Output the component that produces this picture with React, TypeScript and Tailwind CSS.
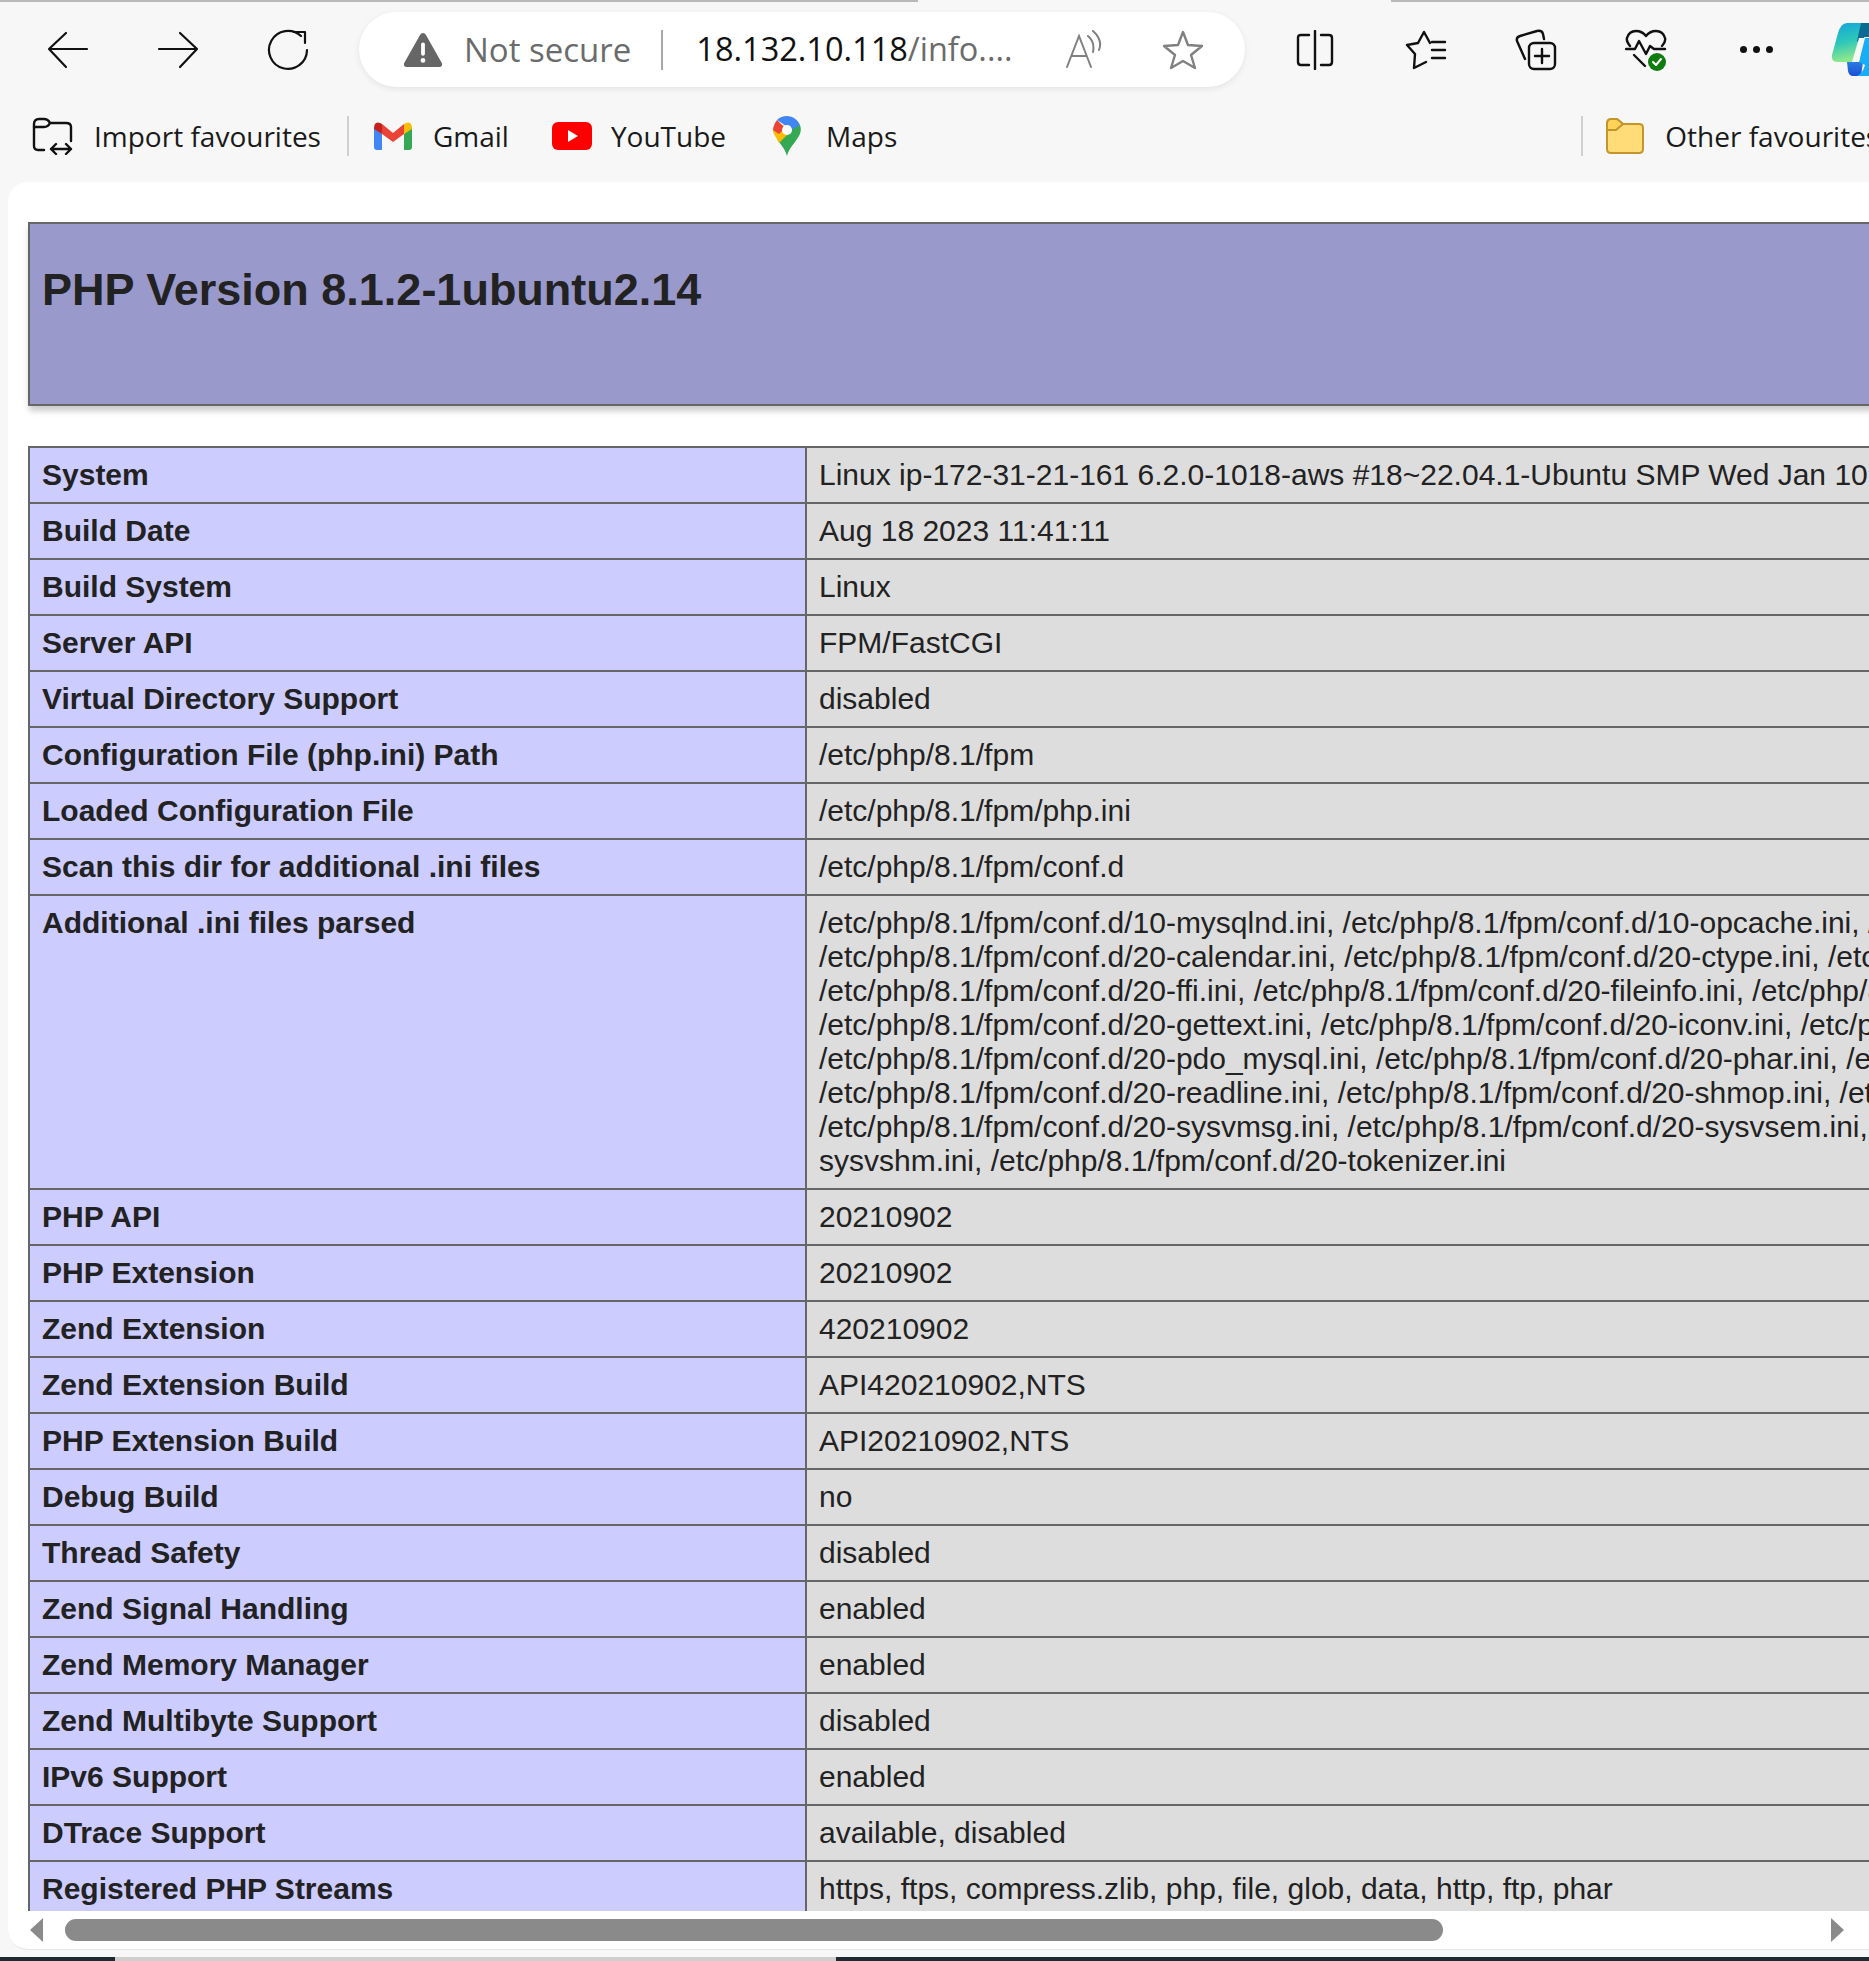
const rows: [string, string[]][] = [
  ['System', ['Linux ip-172-31-21-161 6.2.0-1018-aws #18~22.04.1-Ubuntu SMP Wed Jan 10 22:54:16 UTC 2024 x86_64']],
  ['Build Date', ['Aug 18 2023 11:41:11']],
  ['Build System', ['Linux']],
  ['Server API', ['FPM/FastCGI']],
  ['Virtual Directory Support', ['disabled']],
  ['Configuration File (php.ini) Path', ['/etc/php/8.1/fpm']],
  ['Loaded Configuration File', ['/etc/php/8.1/fpm/php.ini']],
  ['Scan this dir for additional .ini files', ['/etc/php/8.1/fpm/conf.d']],
  [
    'Additional .ini files parsed',
    [
      '/etc/php/8.1/fpm/conf.d/10-mysqlnd.ini, /etc/php/8.1/fpm/conf.d/10-opcache.ini, /etc/php/8.1/fpm/conf.d/10-pdo.ini,',
      '/etc/php/8.1/fpm/conf.d/20-calendar.ini, /etc/php/8.1/fpm/conf.d/20-ctype.ini, /etc/php/8.1/fpm/conf.d/20-exif.ini,',
      '/etc/php/8.1/fpm/conf.d/20-ffi.ini, /etc/php/8.1/fpm/conf.d/20-fileinfo.ini, /etc/php/8.1/fpm/conf.d/20-ftp.ini,',
      '/etc/php/8.1/fpm/conf.d/20-gettext.ini, /etc/php/8.1/fpm/conf.d/20-iconv.ini, /etc/php/8.1/fpm/conf.d/20-mysqli.ini,',
      '/etc/php/8.1/fpm/conf.d/20-pdo_mysql.ini, /etc/php/8.1/fpm/conf.d/20-phar.ini, /etc/php/8.1/fpm/conf.d/20-posix.ini,',
      '/etc/php/8.1/fpm/conf.d/20-readline.ini, /etc/php/8.1/fpm/conf.d/20-shmop.ini, /etc/php/8.1/fpm/conf.d/20-sockets.ini,',
      '/etc/php/8.1/fpm/conf.d/20-sysvmsg.ini, /etc/php/8.1/fpm/conf.d/20-sysvsem.ini, /etc/php/8.1/fpm/conf.d/20-',
      'sysvshm.ini, /etc/php/8.1/fpm/conf.d/20-tokenizer.ini',
    ],
  ],
  ['PHP API', ['20210902']],
  ['PHP Extension', ['20210902']],
  ['Zend Extension', ['420210902']],
  ['Zend Extension Build', ['API420210902,NTS']],
  ['PHP Extension Build', ['API20210902,NTS']],
  ['Debug Build', ['no']],
  ['Thread Safety', ['disabled']],
  ['Zend Signal Handling', ['enabled']],
  ['Zend Memory Manager', ['enabled']],
  ['Zend Multibyte Support', ['disabled']],
  ['IPv6 Support', ['enabled']],
  ['DTrace Support', ['available, disabled']],
  ['Registered PHP Streams', ['https, ftps, compress.zlib, php, file, glob, data, http, ftp, phar']],
];

const Back = () => (
  <svg width="42" height="38" viewBox="0 0 42 38" fill="none" stroke="#111" strokeWidth="2.2" strokeLinecap="round" strokeLinejoin="round">
    <path d="M40 18 H2 M19 2 L2 18 L19 36" />
  </svg>
);

const Forward = () => (
  <svg width="42" height="38" viewBox="0 0 42 38" fill="none" stroke="#111" strokeWidth="2.2" strokeLinecap="round" strokeLinejoin="round">
    <path d="M2 18 H40 M23 2 L40 18 L23 36" />
  </svg>
);

const Refresh = () => (
  <svg width="42" height="42" viewBox="0 0 42 42" fill="none" stroke="#111" strokeWidth="2.2" strokeLinecap="round" strokeLinejoin="round">
    <path d="M27 3 H38 V14" />
    <path d="M34 7 A19 19 0 1 0 40 21" />
  </svg>
);

const Gmail = () => (
  <svg width="38" height="28" viewBox="0 0 38 28">
    <path d="M0 5 V25 Q0 28 3 28 H8 V12 Z" fill="#4285f4" />
    <path d="M30 12 V28 H35 Q38 28 38 25 V5 Z" fill="#34a853" />
    <path d="M8 12 L19 20 L30 12 V2 L19 11 L8 2 Z" fill="#ea4335" />
    <path d="M0 7 L8 12 V2 L6 1 Q0 -1 0 7 Z" fill="#c5221f" />
    <path d="M30 12 L38 7 Q38 -1 32 1 L30 2 Z" fill="#fbbc04" />
  </svg>
);

const Youtube = () => (
  <svg width="40" height="28" viewBox="0 0 40 28">
    <rect x="0" y="0" width="40" height="28" rx="6" fill="#f00" />
    <path d="M16 8 L26 14 L16 20 Z" fill="#fff" />
  </svg>
);

const Maps = () => (
  <svg width="28" height="40" viewBox="0 0 28 40">
    <path d="M14 40 C12 32 7 28 4 23 L24 23 C21 28 16 32 14 40 Z" fill="#34a853" />
    <path d="M24 23 L9 23 L19 10 L27 9 C29 15 27 19 24 23 Z" fill="#34a853" />
    <path d="M4 23 C2 20 0 17 0 14 L10 9 L17 16 L6 27 Z" fill="#fbbc04" />
    <path d="M0 14 C0 10 2 7 4 4 L12 12 L6 18 Z" fill="#ea4335" />
    <path d="M4 4 C7 1 10 0 14 0 C20 0 25 4 27 9 L18 14 L10 8 Z" fill="#4285f4" />
    <circle cx="14" cy="14" r="5" fill="#fff" />
  </svg>
);

const ImportIcon = () => (
  <svg width="42" height="38" viewBox="0 0 42 38" fill="none" stroke="#111" strokeWidth="2.4" strokeLinejoin="round" strokeLinecap="round">
    <path d="M12 33 H6 Q2 33 2 29 V7 Q2 2 7 2 H12 Q16 2 18 6 H34 Q39 6 39 10 V24" />
    <path d="M2 10 H12 Q16 10 18 6" />
    <path d="M19 32 H39 M24 27 L19 32 L24 37 M34 27 L39 32 L34 37" />
  </svg>
);

const FolderIcon = () => (
  <svg width="40" height="38" viewBox="0 0 40 38">
    <path d="M2 8 Q2 2 6 2 H12 L18 7 H34 Q38 7 38 11 V32 Q38 36 34 36 H6 Q2 36 2 32 Z" fill="#ffdc78" stroke="#c4952a" strokeWidth="2" />
    <path d="M2 13 H11 L18 7 L12 2 H6 Q2 2 2 7 Z" fill="#ffd35a" stroke="#c4952a" strokeWidth="2" strokeLinejoin="round" />
  </svg>
);

const ReadAloud = () => (
  <svg width="40" height="40" viewBox="0 0 40 40" fill="none" stroke="#808080" strokeWidth="2" strokeLinecap="round">
    <path d="M2 37 L14 6 L26 37 M7 26 H21" />
    <path d="M23 6 Q30 12 28 22 M28 1 Q38 10 34 20" />
  </svg>
);

const FavStar = () => (
  <svg width="42" height="40" viewBox="0 0 42 40" fill="none" stroke="#808080" strokeWidth="2.4" strokeLinejoin="round">
    <path d="M21 2 L26 15 L40 16 L29 25 L33 38 L21 31 L9 38 L13 25 L2 16 L16 15 Z" />
  </svg>
);

const SplitScreen = () => (
  <svg width="38" height="40" viewBox="0 0 38 40" fill="none" stroke="#111" strokeWidth="2.4" strokeLinecap="round" strokeLinejoin="round">
    <path d="M13 5 H5 Q2 5 2 8 V32 Q2 35 5 35 H13" />
    <path d="M19 1 V39" />
    <path d="M25 5 H33 Q36 5 36 8 V32 Q36 35 33 35 H25" />
  </svg>
);

const FavList = () => (
  <svg width="42" height="40" viewBox="0 0 42 40" fill="none" stroke="#111" strokeWidth="2.4" strokeLinecap="round" strokeLinejoin="round">
    <path d="M25 13 L19 2 L13 13 L2 15 L10 24 L9 38 L21 32" />
    <path d="M27 12 H40 M27 20 H40 M27 28 H40" />
  </svg>
);

const Collections = () => (
  <svg width="42" height="42" viewBox="0 0 42 42" fill="none" stroke="#111" strokeWidth="2.4" strokeLinejoin="round" strokeLinecap="round">
    <rect x="14" y="14" width="26" height="26" rx="5" />
    <path d="M20 27 H34 M27 20 V34" />
    <path d="M10 30 L2 12 Q1 8 5 7 L22 2 Q27 1 28 5 L29 10" />
  </svg>
);

const Health = () => (
  <svg width="42" height="42" viewBox="0 0 42 42" fill="none" stroke="#111" strokeWidth="2.4" strokeLinejoin="round" strokeLinecap="round">
    <path d="M5 17 Q1 12 2 9 Q4 2 11 2 Q17 2 21 7 Q25 2 31 2 Q38 2 40 9 Q41 13 37 17" />
    <path d="M1 20 H10 L14 12 L21 25 L25 17 L29 20 H40" />
    <path d="M9 26 L20 37" />
    <circle cx="32" cy="33" r="9" fill="#107c10" stroke="none" />
    <path d="M28 33 L31 36 L36 30" stroke="#fff" strokeWidth="2" />
  </svg>
);

const Copilot = () => (
  <svg width="64" height="54" viewBox="0 0 64 54">
    <defs>
      <linearGradient id="cop-a" x1="0" y1="0" x2="0.2" y2="1">
        <stop offset="0" stopColor="#10a5dc" />
        <stop offset="0.55" stopColor="#30c8b8" />
        <stop offset="1" stopColor="#8ee88c" />
      </linearGradient>
      <linearGradient id="cop-b" x1="0" y1="0" x2="0" y2="1">
        <stop offset="0" stopColor="#2b7de0" />
        <stop offset="1" stopColor="#1d4fd8" />
      </linearGradient>
    </defs>
    <path d="M16 0 H34 L24 39 H6 Q0 39 1 32 L7 10 Q10 0 16 0 Z" fill="url(#cop-a)" />
    <path d="M16 39 H32 L30 53 H22 Q18 53 17 48 Z" fill="url(#cop-b)" />
    <path d="M30 0 H64 V14 H34 Q32 14 30 22 L26 18 Z" fill="#0a6a92" />
    <path d="M32 15 H64 V53 H26 Q32 50 34 42 L28 39 Z" fill="#18aef5" />
    <path d="M28 15 H34 L28 39 H21 Z" fill="#f7f7f7" />
  </svg>
);

export default function App() {
  return (
    <div className="flex h-[1961px] w-[1869px] flex-col overflow-hidden bg-[#f7f7f7] font-['Open_Sans',sans-serif]">
      {/* 顶部标签残边 */}
      <div className="flex h-[2px] shrink-0">
        <div className="h-full w-[918px] bg-[#b8b8b8]" />
        <div className="h-full w-[473px] bg-[#f7f7f7]" />
        <div className="h-full flex-1 bg-[#b8b8b8]" />
      </div>

      {/* 地址栏 */}
      <div className="flex h-[86px] shrink-0 items-center pt-[9px]">
        <div className="flex w-[359px] shrink-0 items-center">
          <div className="ml-[47px] shrink-0"><Back /></div>
          <div className="ml-[68px] shrink-0"><Forward /></div>
          <div className="ml-[68px] shrink-0"><Refresh /></div>
        </div>
        <div className="flex h-[75px] w-[886px] shrink-0 items-center rounded-[38px] bg-white shadow-[0_2px_6px_rgba(0,0,0,0.08)]">
          <svg width="40" height="36" viewBox="0 0 42 38" className="ml-[44px] shrink-0">
            <path d="M21 1 Q23 1 24 3 L41 33 Q42 37 38 37 H4 Q0 37 1 33 L18 3 Q19 1 21 1 Z" fill="#666" />
            <rect x="19" y="11" width="4" height="14" rx="2" fill="#fff" />
            <circle cx="21" cy="30" r="2.5" fill="#fff" />
          </svg>
          <span className="ml-[21px] shrink-0 text-[33px] leading-none whitespace-nowrap text-[#6b6b6b]">Not secure</span>
          <div className="ml-[30px] h-[40px] w-[2px] shrink-0 bg-[#a8a8a8]" />
          <span className="ml-[33px] shrink-0 text-[32.5px] leading-none whitespace-nowrap text-[#111]">
            18.132.10.118<span className="text-[#6b6b6b]">/info....</span>
          </span>
          <div className="ml-[52px] shrink-0"><ReadAloud /></div>
          <div className="ml-[57px] shrink-0"><FavStar /></div>
        </div>
        <div className="ml-[14px] flex flex-1 items-center">
          <div className="flex w-[111px] shrink-0 justify-center"><SplitScreen /></div>
          <div className="flex w-[111px] shrink-0 justify-center"><FavList /></div>
          <div className="flex w-[110px] shrink-0 justify-center"><Collections /></div>
          <div className="flex w-[110px] shrink-0 justify-center"><Health /></div>
          <div className="flex w-[110px] shrink-0 justify-center gap-[6px]">
            <i className="h-[7px] w-[7px] rounded-full bg-[#111]" />
            <i className="h-[7px] w-[7px] rounded-full bg-[#111]" />
            <i className="h-[7px] w-[7px] rounded-full bg-[#111]" />
          </div>
          <div className="ml-[20px] shrink-0"><Copilot /></div>
        </div>
      </div>

      {/* 收藏栏 */}
      <div className="flex h-[94px] shrink-0 items-center whitespace-nowrap pt-[2px] text-[28px] text-[#1a1a1a]">
        <div className="ml-[32px] shrink-0"><ImportIcon /></div>
        <span className="ml-[20px] shrink-0">Import favourites</span>
        <div className="ml-[26px] h-[40px] w-[2px] shrink-0 bg-[#d0d0d0]" />
        <div className="ml-[25px] shrink-0"><Gmail /></div>
        <span className="ml-[21px] shrink-0">Gmail</span>
        <div className="ml-[43px] shrink-0"><Youtube /></div>
        <span className="ml-[19px] shrink-0">YouTube</span>
        <div className="ml-[47px] shrink-0"><Maps /></div>
        <span className="ml-[25px] shrink-0">Maps</span>
        <div className="ml-[684px] h-[40px] w-[2px] shrink-0 bg-[#d0d0d0]" />
        <div className="ml-[22px] shrink-0"><FolderIcon /></div>
        <span className="ml-[20px] shrink-0">Other favourites</span>
      </div>

      {/* 页面内容 */}
      <div className="ml-[8px] flex h-[1768px] shrink-0 flex-col overflow-hidden rounded-tl-[20px] rounded-bl-[20px] border-b border-[#e6e6e6] bg-white font-['Liberation_Sans',sans-serif] text-[#222]">
        <div className="min-h-0 flex-1 overflow-hidden pt-[40px] pl-[20px]">
          <div className="h-[184px] w-[2200px] border-2 border-[#666] bg-[#9999cc] pt-[36px] pl-[12px] shadow-[1px_5px_6px_#ccc]">
            <h1 className="text-[45px] leading-[60px] font-bold">PHP Version 8.1.2-1ubuntu2.14</h1>
          </div>
          <table className="mt-[40px] w-[2200px] table-fixed border-collapse text-[30px] leading-[34px]">
            <tbody>
              {rows.map(([label, lines]) => (
                <tr key={label}>
                  <td className="w-[777px] border-2 border-[#666] bg-[#ccccff] px-[12px] py-[10px] align-top font-bold">{label}</td>
                  <td className="border-2 border-[#666] bg-[#dddddd] px-[12px] py-[10px] align-top whitespace-nowrap">
                    {lines.map((line) => (
                      <div key={line}>{line}</div>
                    ))}
                  </td>
                </tr>
              ))}
            </tbody>
          </table>
        </div>

        {/* 横向滚动条 */}
        <div className="flex h-[38px] shrink-0 items-center">
          <svg width="13" height="24" viewBox="0 0 13 24" className="ml-[22px] shrink-0"><path d="M13 0 V24 L0 12 Z" fill="#8a8a8a" /></svg>
          <div className="ml-[22px] h-[22px] w-[1378px] shrink-0 rounded-full bg-[#8a8a8a]" />
          <svg width="13" height="24" viewBox="0 0 13 24" className="ml-[388px] shrink-0"><path d="M0 0 V24 L13 12 Z" fill="#8a8a8a" /></svg>
        </div>
      </div>

      {/* 任务栏残边 */}
      <div className="mt-[7px] flex h-[4px] shrink-0 bg-[#1f2a30]">
        <div className="ml-[115px] h-full w-[721px] bg-[#cfcfcf]" />
      </div>
    </div>
  );
}
